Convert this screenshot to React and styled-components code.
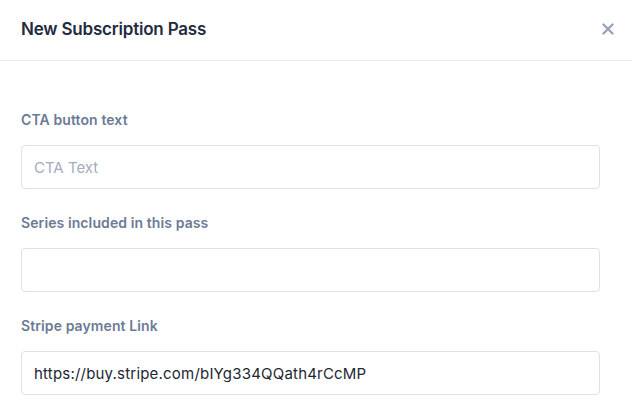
import React from 'react';
import styled, { createGlobalStyle } from 'styled-components';

const GlobalStyle = createGlobalStyle`
  body {
    margin: 0;
    background: #ffffff;
    font-family: Inter, "Noto Sans", sans-serif;
  }
`;

const Modal = styled.div`
  width: 632px;
  height: 420px;
  background: #ffffff;
  overflow: hidden;
`;

const Header = styled.header`
  height: 61px;
  box-sizing: border-box;
  display: flex;
  align-items: center;
  justify-content: space-between;
  padding: 0 14px 2px 21px;
  border-bottom: 1px solid #ededf0;
`;

const Title = styled.h1`
  margin: 0;
  font-size: 17px;
  font-weight: 600;
  letter-spacing: -0.2px;
  color: #232b3d;
`;

const Close = styled.button`
  border: 0;
  background: none;
  padding: 0;
  width: 20px;
  height: 20px;
  display: flex;
  align-items: center;
  justify-content: center;
  cursor: pointer;
`;

const Body = styled.div`
  padding: 49px 32px 0 21px;
  display: flex;
  flex-direction: column;
  gap: 24px;
`;

const Field = styled.div`
  display: flex;
  flex-direction: column;
  gap: 15px;
`;

const Label = styled.label`
  font-size: 14px;
  line-height: 20px;
  font-weight: 600;
  letter-spacing: 0.1px;
  color: #6c7a96;
`;

const Input = styled.input`
  box-sizing: border-box;
  width: 579px;
  height: 44px;
  border: 1px solid #e1e1e4;
  border-radius: 4px;
  padding: 0 12px;
  font-family: Inter, "Noto Sans", sans-serif;
  font-size: 15px;
  letter-spacing: 0.2px;
  color: #222831;
  outline: none;

  &::placeholder {
    color: #a3adbf;
    letter-spacing: 0;
  }
`;

const fields = [
  { label: 'CTA button text', placeholder: 'CTA Text' },
  { label: 'Series included in this pass' },
  { label: 'Stripe payment Link', value: 'https://buy.stripe.com/bIYg334QQath4rCcMP' },
];

export default function App() {
  return (
    <Modal>
      <GlobalStyle />
      <Header>
        <Title>New Subscription Pass</Title>
        <Close aria-label="Close">
          <svg width="12" height="12" viewBox="0 0 12 12">
            <path d="M1.5 1.5 L10.5 10.5 M10.5 1.5 L1.5 10.5" stroke="#9aa3b2" strokeWidth="2.4" strokeLinecap="round" />
          </svg>
        </Close>
      </Header>
      <Body>
        {fields.map((f) => (
          <Field key={f.label}>
            <Label>{f.label}</Label>
            <Input placeholder={f.placeholder} defaultValue={f.value} />
          </Field>
        ))}
      </Body>
    </Modal>
  );
}
